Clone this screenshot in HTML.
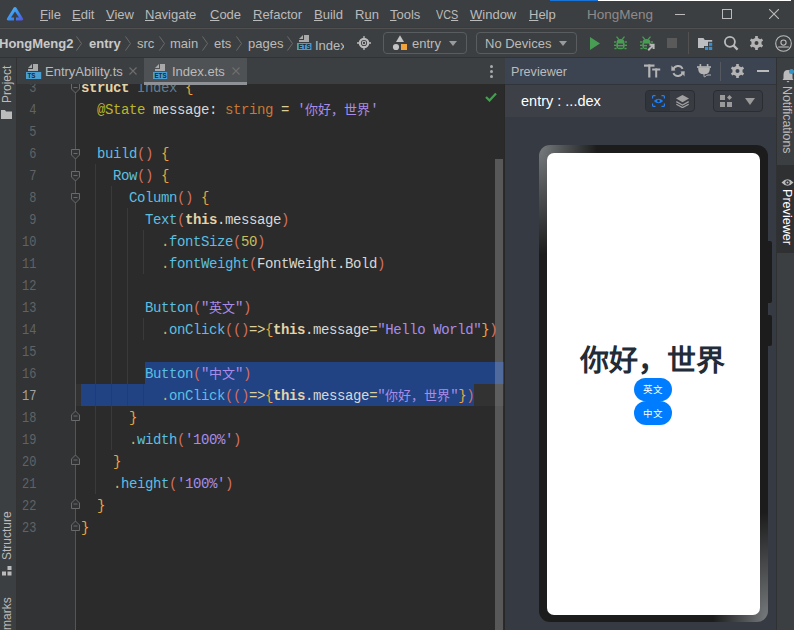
<!DOCTYPE html>
<html lang="zh-CN"><head><meta charset="utf-8">
<style>
*{margin:0;padding:0;box-sizing:border-box}
html,body{width:794px;height:630px;overflow:hidden;background:#3c3f41;font-family:"Liberation Sans",sans-serif;}
.a{position:absolute}
.menu span{position:absolute;top:7px;font-size:13px;line-height:15px;color:#bbbbbb;white-space:nowrap}
.menu u{text-decoration:underline;text-underline-offset:1px}
.cr{position:absolute;top:36px;font-size:13px;line-height:15px;color:#bbbbbb;white-space:nowrap}
.chev{position:absolute;top:36px;width:6px;height:15px}
.ln{position:absolute;left:17px;width:19.5px;text-align:right;font-family:"Liberation Mono",monospace;font-size:12px;color:#606366;line-height:22px;height:22px;padding-top:2px;transform:scaleY(1.2);transform-origin:0 15px}
.cl{position:absolute;left:81px;font-family:"Liberation Mono",monospace;font-size:14px;letter-spacing:-0.4px;line-height:22px;height:23px;padding-top:1px;white-space:pre;color:#a9b7c6}
.cj{font-size:13px;letter-spacing:0}
.kw{color:#e3d3a7;font-weight:bold}
.an{color:#bbb529}
.ty{color:#cc7832}
.st{color:#a98ce8}
.fn{color:#5cbfe0}
.pa{color:#d0705e}
.br{color:#eba53c}
.wh{color:#d7d7d7}
.op{color:#dccf9c}
.nu{color:#c8bd5a}
.dot{color:#d7b060}
.guide{position:absolute;width:1px;background:#393939}
.fold{position:absolute;left:71px;width:9px;height:10px}
</style></head><body>
<!-- title bar -->
<div class="a" style="left:550px;top:0;width:48px;height:1px;background:#1a74d8"></div>
<div class="a" style="left:598px;top:0;width:193px;height:1px;background:#ffffff"></div>
<div class="a" style="left:0;top:27px;width:794px;height:1px;background:#393c3e"></div>
<div class="a" style="left:0;top:28px;width:794px;height:1px;background:#505050"></div>
<div class="a" style="left:0;top:57px;width:794px;height:1px;background:#323232"></div>

<!-- logo -->
<svg class="a" style="left:4px;top:4px" width="24" height="20" viewBox="0 0 24 20">
<defs><linearGradient id="lg" x1="0" y1="0" x2="1" y2="1"><stop offset="0" stop-color="#5cc0f8"/><stop offset="0.55" stop-color="#3a8ff0"/><stop offset="1" stop-color="#5a4fe0"/></linearGradient></defs>
<path fill-rule="evenodd" fill="url(#lg)" d="M9.8 3.6 Q11 2.2 12.2 3.6 L19 14.6 Q19.8 16.4 18 16.4 L4 16.4 Q2.2 16.4 3 14.6 Z M11 7.4 L15 13.6 L12 13.6 L12 16.4 L10 16.4 L10 13.6 L7 13.6 Z"/>
</svg>
<div class="menu">
<span style="left:40px"><u>F</u>ile</span>
<span style="left:72px"><u>E</u>dit</span>
<span style="left:106px"><u>V</u>iew</span>
<span style="left:145px"><u>N</u>avigate</span>
<span style="left:210px"><u>C</u>ode</span>
<span style="left:253px"><u>R</u>efactor</span>
<span style="left:314px"><u>B</u>uild</span>
<span style="left:355px">R<u>u</u>n</span>
<span style="left:390px"><u>T</u>ools</span>
<span style="left:436px;transform:scaleX(0.83);transform-origin:0 0">VC<u>S</u></span>
<span style="left:470px"><u>W</u>indow</span>
<span style="left:529px"><u>H</u>elp</span>
<span style="left:587px;color:#8e8b8a;font-size:13.5px">HongMeng</span>
</div>
<!-- window controls -->
<div class="a" style="left:675px;top:14px;width:10px;height:1px;background:#bbbbbb"></div>
<div class="a" style="left:722px;top:9px;width:10px;height:10px;border:1px solid #bbbbbb"></div>
<svg class="a" style="left:769px;top:9px" width="10" height="10" viewBox="0 0 10 10"><path d="M0 0 L10 10 M10 0 L0 10" stroke="#bbbbbb" stroke-width="1.1"/></svg>

<!-- breadcrumb -->
<span class="cr" style="left:-1px;font-weight:bold;color:#c9c9c9">HongMeng2</span>
<svg class="chev" style="left:76px" viewBox="0 0 6 15"><path d="M0.5 0.5 L5.5 7.5 L0.5 14.5" stroke="#6a6a6a" fill="none"/></svg>
<span class="cr" style="left:89px;font-weight:bold;color:#c9c9c9">entry</span>
<svg class="chev" style="left:125px" viewBox="0 0 6 15"><path d="M0.5 0.5 L5.5 7.5 L0.5 14.5" stroke="#6a6a6a" fill="none"/></svg>
<span class="cr" style="left:137px">src</span>
<svg class="chev" style="left:159px" viewBox="0 0 6 15"><path d="M0.5 0.5 L5.5 7.5 L0.5 14.5" stroke="#6a6a6a" fill="none"/></svg>
<span class="cr" style="left:170px">main</span>
<svg class="chev" style="left:236px" viewBox="0 0 6 15"><path d="M0.5 0.5 L5.5 7.5 L0.5 14.5" stroke="#6a6a6a" fill="none"/></svg>
<span class="cr" style="left:214px">ets</span>
<svg class="chev" style="left:202px" viewBox="0 0 6 15"><path d="M0.5 0.5 L5.5 7.5 L0.5 14.5" stroke="#6a6a6a" fill="none"/></svg>
<span class="cr" style="left:248px">pages</span>
<svg class="chev" style="left:287px" viewBox="0 0 6 15"><path d="M0.5 0.5 L5.5 7.5 L0.5 14.5" stroke="#6a6a6a" fill="none"/></svg>
<!-- ETS icon -->
<svg class="a" style="left:297px;top:34px" width="16" height="17" viewBox="0 0 16 17"><path d="M2 5 L6 1 L6 5 Z M7 1 H12 V8 H2 V6 H7 Z" fill="#a9a9a9"/><rect x="0" y="9" width="14.4" height="7" fill="#4a9fd0"/><text x="1.5" y="15.2" font-family="Liberation Sans" font-weight="bold" font-size="7.4" fill="#1d2731" textLength="12" lengthAdjust="spacingAndGlyphs">ETS</text></svg>
<div class="a" style="left:315px;top:36px;width:29px;height:16px;overflow:hidden"><span style="font-size:13px;line-height:15px;color:#bbbbbb">Index</span></div>
<!-- target icon -->
<svg class="a" style="left:357px;top:36px" width="14" height="14" viewBox="0 0 14 14"><circle cx="7" cy="7" r="4.2" fill="none" stroke="#bbbbbb" stroke-width="2.2"/><circle cx="7" cy="7" r="1.7" fill="none" stroke="#bbbbbb" stroke-width="1.1"/><path d="M7 0 V2.5 M7 11.5 V14 M0 7 H2.5 M11.5 7 H14" stroke="#bbbbbb" stroke-width="1.3"/></svg>
<!-- entry combo -->
<div class="a" style="left:383px;top:32px;width:84px;height:22px;border:1px solid #5a5d5f;border-radius:4px"></div>
<svg class="a" style="left:392px;top:35px" width="16" height="16" viewBox="0 0 16 16"><path d="M8 0.3 L12 6.9 L4 6.9 Z" fill="#c4c4c4"/><circle cx="4" cy="12" r="3.1" fill="#c4c4c4"/><rect x="9" y="9" width="6" height="6" fill="#f2a43a"/></svg>
<span class="cr" style="left:412px">entry</span>
<svg class="a" style="left:449px;top:41px" width="8" height="5" viewBox="0 0 8 5"><path d="M0 0 L8 0 L4 5 Z" fill="#9a9a9a"/></svg>
<!-- no devices -->
<div class="a" style="left:476px;top:32px;width:101px;height:22px;border:1px solid #5a5d5f;border-radius:4px"></div>
<span class="cr" style="left:485px">No Devices</span>
<svg class="a" style="left:559px;top:41px" width="8" height="5" viewBox="0 0 8 5"><path d="M0 0 L8 0 L4 5 Z" fill="#9a9a9a"/></svg>
<!-- run icons -->
<svg class="a" style="left:590px;top:37px" width="10" height="13" viewBox="0 0 10 13"><path d="M0 0 L10 6.5 L0 13 Z" fill="#499c54"/></svg>
<svg class="a" style="left:613.5px;top:36px" width="13" height="14" viewBox="0 0 13 14"><g fill="#499c54"><path d="M3 0.3 L5.5 3.2 L4.6 4 L2 1.1 Z M10 0.3 L7.5 3.2 L8.4 4 L11 1.1 Z"/><ellipse cx="6.5" cy="5.2" rx="3.6" ry="2.3"/><rect x="2.2" y="5.2" width="8.6" height="8" rx="3.6"/><rect x="0" y="5.3" width="2.4" height="1.4"/><rect x="10.6" y="5.3" width="2.4" height="1.4"/><rect x="0" y="8.6" width="2.4" height="1.4"/><rect x="10.6" y="8.6" width="2.4" height="1.4"/><rect x="0.4" y="11.8" width="2.2" height="1.4"/><rect x="10.4" y="11.8" width="2.2" height="1.4"/></g><rect x="4" y="7.6" width="5" height="1.3" fill="#3c3f41"/><rect x="4" y="10.4" width="5" height="1.3" fill="#3c3f41"/></svg>
<svg class="a" style="left:640px;top:36px" width="15" height="15" viewBox="0 0 15 15"><g fill="#499c54"><path d="M3 0.3 L5.5 3.2 L4.6 4 L2 1.1 Z M10 0.3 L7.5 3.2 L8.4 4 L11 1.1 Z"/><ellipse cx="6.5" cy="5.2" rx="3.6" ry="2.3"/><rect x="2.2" y="5.2" width="8.6" height="8" rx="3.6"/><rect x="0" y="5.3" width="2.4" height="1.4"/><rect x="10.6" y="5.3" width="2.4" height="1.4"/><rect x="0" y="8.6" width="2.4" height="1.4"/><rect x="10.6" y="8.6" width="2.4" height="1.4"/><rect x="0.4" y="11.8" width="2.2" height="1.4"/><rect x="10.4" y="11.8" width="2.2" height="1.4"/></g><rect x="4" y="7.6" width="5" height="1.3" fill="#3c3f41"/><rect x="4" y="10.4" width="5" height="1.3" fill="#3c3f41"/><path d="M7 8 H15 V15 H7 Z" fill="#3c3f41"/><path d="M8.2 14.2 L13 9.4 M9.5 8.8 H13.6 V12.9" stroke="#b8b8b8" stroke-width="2" fill="none"/></svg>
<div class="a" style="left:667px;top:38px;width:10px;height:10px;background:#5a5a5a"></div>
<div class="a" style="left:688px;top:32px;width:1px;height:22px;background:#515151"></div>
<svg class="a" style="left:698px;top:37px" width="15" height="14" viewBox="0 0 15 14"><path d="M0 1 H5.5 L6.8 3 H14.2 V11 H0 Z" fill="#bbbdc0"/><path d="M10 4.8 H15 V14 H6 V9 H10 Z" fill="#3c3f41"/><g fill="#3592d8"><rect x="11" y="5.8" width="3.2" height="3"/><rect x="7" y="9.8" width="3.2" height="3.2"/><rect x="11" y="9.8" width="3.2" height="3.2"/></g></svg>
<svg class="a" style="left:723px;top:35px" width="16" height="16" viewBox="0 0 16 16"><circle cx="6.9" cy="6.8" r="5" fill="none" stroke="#bbbbbb" stroke-width="1.8"/><path d="M10.4 10.4 L14.6 14.6" stroke="#bbbbbb" stroke-width="2.2"/></svg>
<svg class="a" style="left:750px;top:36px" width="13" height="14" viewBox="0 0 13 14"><path fill-rule="evenodd" fill="#b4b4b4" d="M7.89 1.99 L7.81 0.12 L5.19 0.12 L5.11 1.99 L2.86 3.29 L1.20 2.43 L-0.11 4.70 L1.47 5.70 L1.47 8.30 L-0.11 9.30 L1.20 11.57 L2.86 10.71 L5.11 12.01 L5.19 13.88 L7.81 13.88 L7.89 12.01 L10.14 10.71 L11.80 11.57 L13.11 9.30 L11.53 8.30 L11.53 5.70 L13.11 4.70 L11.80 2.43 L10.14 3.29 Z M6.5 5 A2 2 0 1 0 6.5 9 A2 2 0 1 0 6.5 5 Z"/></svg>
<svg class="a" style="left:774.5px;top:34.5px" width="17" height="17" viewBox="0 0 17 17"><circle cx="8.5" cy="8.5" r="7.8" fill="none" stroke="#bbbbbb" stroke-width="1.1"/><circle cx="8.5" cy="7.6" r="2.6" fill="none" stroke="#bbbbbb" stroke-width="1.1"/><path d="M3.2 12 H13.8" stroke="#bbbbbb" stroke-width="1.1"/></svg>

<!-- left strip -->
<div class="a" style="left:16px;top:58px;width:1px;height:572px;background:#323232"></div>
<div class="a" style="left:1px;top:103px;transform-origin:0 0;transform:rotate(-90deg);font-size:12px;line-height:13px;color:#bbbbbb;white-space:nowrap">Project</div>
<svg class="a" style="left:1px;top:110px" width="11" height="9" viewBox="0 0 11 9"><path d="M0 0 H4 L5 1.5 H11 V9 H0 Z" fill="#bbbbbb"/></svg>
<div class="a" style="left:1px;top:560px;transform-origin:0 0;transform:rotate(-90deg);font-size:12px;line-height:13px;color:#bbbbbb;white-space:nowrap">Structure</div>
<svg class="a" style="left:2px;top:566px" width="10" height="10" viewBox="0 0 10 10"><g fill="#bbbbbb"><rect x="5.5" y="0" width="4" height="4"/><rect x="0" y="5.5" width="4" height="4"/><rect x="5.5" y="5.5" width="4" height="4"/></g></svg>
<div class="a" style="left:1px;top:630px;transform-origin:0 0;transform:rotate(-90deg);font-size:12px;line-height:13px;color:#bbbbbb;white-space:nowrap">marks</div>

<!-- tabs -->
<div class="a" style="left:144px;top:58px;width:103px;height:26px;background:#4e5254"></div>

<svg class="a" style="left:25.5px;top:63px" width="16" height="17" viewBox="0 0 16 17"><path d="M2 5 L6 1 L6 5 Z M7 1 H12 V8 H2 V6 H7 Z" fill="#a9a9a9"/><rect x="0" y="9" width="15.2" height="7" fill="#4a9fd0"/><text x="1.5" y="15.2" font-family="Liberation Sans" font-weight="bold" font-size="7.4" fill="#1d2731" textLength="8" lengthAdjust="spacingAndGlyphs">TS</text></svg>
<span class="a" style="left:45px;top:64px;font-size:13px;line-height:15px;color:#bbbbbb">EntryAbility.ts</span>
<svg class="a" style="left:129px;top:67px" width="8" height="8" viewBox="0 0 8 8"><path d="M0.5 0.5 L7.5 7.5 M7.5 0.5 L0.5 7.5" stroke="#6e6e6e" stroke-width="1.1"/></svg>
<svg class="a" style="left:153px;top:63px" width="16" height="17" viewBox="0 0 16 17"><path d="M2 5 L6 1 L6 5 Z M7 1 H12 V8 H2 V6 H7 Z" fill="#a9a9a9"/><rect x="0" y="9" width="14.2" height="7" fill="#4a9fd0"/><text x="1.5" y="15.2" font-family="Liberation Sans" font-weight="bold" font-size="7.4" fill="#1d2731" textLength="12" lengthAdjust="spacingAndGlyphs">ETS</text></svg>
<span class="a" style="left:172px;top:64px;font-size:13px;line-height:15px;color:#bbbbbb">Index.ets</span>
<svg class="a" style="left:232px;top:67px" width="8" height="8" viewBox="0 0 8 8"><path d="M0.5 0.5 L7.5 7.5 M7.5 0.5 L0.5 7.5" stroke="#6e6e6e" stroke-width="1.1"/></svg>
<!-- kebab -->
<div class="a" style="left:490px;top:65px;width:3px;height:3px;border-radius:50%;background:#aaaaaa"></div>
<div class="a" style="left:490px;top:70px;width:3px;height:3px;border-radius:50%;background:#aaaaaa"></div>
<div class="a" style="left:490px;top:75px;width:3px;height:3px;border-radius:50%;background:#aaaaaa"></div>

<!-- editor -->
<div class="a" style="left:17px;top:84px;width:488px;height:546px;overflow:hidden;background:#2b2b2b">
 <div class="a" style="left:0;top:0;width:59px;height:546px;background:#313335"></div>
<!--CODE-->
<div class="a" style="left:59px;top:300px;width:428px;height:22px;background:#323232"></div>
<div class="a" style="left:128px;top:278px;width:359px;height:22px;background:#214283"></div>
<div class="a" style="left:64px;top:300px;width:393px;height:22px;background:#214283"></div>
<div class="guide" style="left:78px;top:80px;height:330px;background:#3a3a3a"></div>
<div class="guide" style="left:94px;top:102px;height:264px;background:#3a3a3a"></div>
<div class="guide" style="left:110px;top:124px;height:198px;background:#3a3a3a"></div>
<div class="guide" style="left:126px;top:146px;height:44px;background:#3a3a3a"></div>
<div class="guide" style="left:126px;top:234px;height:22px;background:#3a3a3a"></div>
<div class="guide" style="left:126px;top:300px;height:22px;background:#3a3a3a"></div>
<div class="a" style="left:58px;top:0px;width:1px;height:546px;background:#555555"></div>
<svg class="a" style="left:54px;top:-1px" width="9" height="11" viewBox="0 0 9 11"><path d="M0.5 0.5 H8.5 V6 L4.5 10 L0.5 6 Z" fill="#313335" stroke="#6a6a6a" stroke-width="1"/><path d="M2.5 4.5 H6.5" stroke="#6a6a6a" stroke-width="1"/></svg>
<svg class="a" style="left:54px;top:65px" width="9" height="11" viewBox="0 0 9 11"><path d="M0.5 0.5 H8.5 V6 L4.5 10 L0.5 6 Z" fill="#313335" stroke="#6a6a6a" stroke-width="1"/><path d="M2.5 4.5 H6.5" stroke="#6a6a6a" stroke-width="1"/></svg>
<svg class="a" style="left:54px;top:87px" width="9" height="11" viewBox="0 0 9 11"><path d="M0.5 0.5 H8.5 V6 L4.5 10 L0.5 6 Z" fill="#313335" stroke="#6a6a6a" stroke-width="1"/><path d="M2.5 4.5 H6.5" stroke="#6a6a6a" stroke-width="1"/></svg>
<svg class="a" style="left:54px;top:109px" width="9" height="11" viewBox="0 0 9 11"><path d="M0.5 0.5 H8.5 V6 L4.5 10 L0.5 6 Z" fill="#313335" stroke="#6a6a6a" stroke-width="1"/><path d="M2.5 4.5 H6.5" stroke="#6a6a6a" stroke-width="1"/></svg>
<svg class="a" style="left:54px;top:326px" width="9" height="11" viewBox="0 0 9 11"><path d="M0.5 10.5 H8.5 V5 L4.5 1 L0.5 5 Z" fill="#313335" stroke="#6a6a6a" stroke-width="1"/><path d="M2.5 6 H6.5" stroke="#6a6a6a" stroke-width="1"/></svg>
<svg class="a" style="left:54px;top:370px" width="9" height="11" viewBox="0 0 9 11"><path d="M0.5 10.5 H8.5 V5 L4.5 1 L0.5 5 Z" fill="#313335" stroke="#6a6a6a" stroke-width="1"/><path d="M2.5 6 H6.5" stroke="#6a6a6a" stroke-width="1"/></svg>
<svg class="a" style="left:54px;top:414px" width="9" height="11" viewBox="0 0 9 11"><path d="M0.5 10.5 H8.5 V5 L4.5 1 L0.5 5 Z" fill="#313335" stroke="#6a6a6a" stroke-width="1"/><path d="M2.5 6 H6.5" stroke="#6a6a6a" stroke-width="1"/></svg>
<svg class="a" style="left:54px;top:436px" width="9" height="11" viewBox="0 0 9 11"><path d="M0.5 10.5 H8.5 V5 L4.5 1 L0.5 5 Z" fill="#313335" stroke="#6a6a6a" stroke-width="1"/><path d="M2.5 6 H6.5" stroke="#6a6a6a" stroke-width="1"/></svg>
<div class="ln" style="left:0;top:-8px;color:#606366">3</div>
<div class="cl" style="left:64px;top:-8px"><span class="kw">struct</span> <span style="color:#5d7f95">Index</span> <span class="br">{</span></div>
<div class="ln" style="left:0;top:14px;color:#606366">4</div>
<div class="cl" style="left:64px;top:14px">  <span class="an">@State</span> <span class="wh">message:</span> <span class="ty">string</span> <span class="op">=</span> <span class="st">'<span class="cj">你好，世界</span>'</span></div>
<div class="ln" style="left:0;top:36px;color:#606366">5</div>
<div class="cl" style="left:64px;top:36px"></div>
<div class="ln" style="left:0;top:58px;color:#606366">6</div>
<div class="cl" style="left:64px;top:58px">  <span class="fn">build</span><span class="pa">()</span> <span class="br">{</span></div>
<div class="ln" style="left:0;top:80px;color:#606366">7</div>
<div class="cl" style="left:64px;top:80px">    <span class="fn">Row</span><span class="pa">()</span> <span class="br">{</span></div>
<div class="ln" style="left:0;top:102px;color:#606366">8</div>
<div class="cl" style="left:64px;top:102px">      <span class="fn">Column</span><span class="pa">()</span> <span class="br">{</span></div>
<div class="ln" style="left:0;top:124px;color:#606366">9</div>
<div class="cl" style="left:64px;top:124px">        <span class="fn">Text</span><span class="pa">(</span><span class="kw">this</span><span class="wh">.message</span><span class="pa">)</span></div>
<div class="ln" style="left:0;top:146px;color:#606366">10</div>
<div class="cl" style="left:64px;top:146px">          <span class="dot">.</span><span class="fn">fontSize</span><span class="pa">(</span><span class="nu">50</span><span class="pa">)</span></div>
<div class="ln" style="left:0;top:168px;color:#606366">11</div>
<div class="cl" style="left:64px;top:168px">          <span class="dot">.</span><span class="fn">fontWeight</span><span class="pa">(</span><span class="wh">FontWeight.Bold</span><span class="pa">)</span></div>
<div class="ln" style="left:0;top:190px;color:#606366">12</div>
<div class="cl" style="left:64px;top:190px"></div>
<div class="ln" style="left:0;top:212px;color:#606366">13</div>
<div class="cl" style="left:64px;top:212px">        <span class="fn">Button</span><span class="pa">(</span><span class="st">"<span class="cj">英文</span>"</span><span class="pa">)</span></div>
<div class="ln" style="left:0;top:234px;color:#606366">14</div>
<div class="cl" style="left:64px;top:234px">          <span class="dot">.</span><span class="fn">onClick</span><span class="pa">(()</span><span class="op">=&gt;</span><span class="br">{</span><span class="kw">this</span><span class="wh">.message</span><span class="op">=</span><span class="st">"Hello World"</span><span class="br">}</span><span class="pa">)</span></div>
<div class="ln" style="left:0;top:256px;color:#606366">15</div>
<div class="cl" style="left:64px;top:256px"></div>
<div class="ln" style="left:0;top:278px;color:#606366">16</div>
<div class="cl" style="left:64px;top:278px">        <span class="fn">Button</span><span class="pa">(</span><span class="st">"<span class="cj">中文</span>"</span><span class="pa">)</span></div>
<div class="ln" style="left:0;top:300px;color:#a4a3a3">17</div>
<div class="cl" style="left:64px;top:300px">          <span class="dot">.</span><span class="fn">onClick</span><span class="pa">(()</span><span class="op">=&gt;</span><span class="br">{</span><span class="kw">this</span><span class="wh">.message</span><span class="op">=</span><span class="st">"<span class="cj">你好，世界</span>"</span><span class="br">}</span><span class="pa">)</span></div>
<div class="ln" style="left:0;top:322px;color:#606366">18</div>
<div class="cl" style="left:64px;top:322px">      <span class="br">}</span></div>
<div class="ln" style="left:0;top:344px;color:#606366">19</div>
<div class="cl" style="left:64px;top:344px">      <span class="dot">.</span><span class="fn">width</span><span class="pa">(</span><span class="st">'100%'</span><span class="pa">)</span></div>
<div class="ln" style="left:0;top:366px;color:#606366">20</div>
<div class="cl" style="left:64px;top:366px">    <span class="br">}</span></div>
<div class="ln" style="left:0;top:388px;color:#606366">21</div>
<div class="cl" style="left:64px;top:388px">    <span class="dot">.</span><span class="fn">height</span><span class="pa">(</span><span class="st">'100%'</span><span class="pa">)</span></div>
<div class="ln" style="left:0;top:410px;color:#606366">22</div>
<div class="cl" style="left:64px;top:410px">  <span class="br">}</span></div>
<div class="ln" style="left:0;top:432px;color:#606366">23</div>
<div class="cl" style="left:64px;top:432px"><span class="br">}</span></div>
<div class="a" style="left:478px;top:75px;width:8px;height:471px;background:rgba(255,255,255,0.217)"></div>
<svg class="a" style="left:468px;top:8px" width="12" height="10" viewBox="0 0 12 10"><path d="M1 5 L4.5 8.5 L11 1.5" stroke="#499c54" stroke-width="2.2" fill="none"/></svg>
<!--/CODE-->
</div>
<div class="a" style="left:504px;top:84px;width:1px;height:546px;background:#282828"></div>
<div class="a" style="left:144px;top:82px;width:103px;height:3px;background:#8e9296"></div>

<!-- previewer -->
<div class="a" style="left:505px;top:58px;width:271px;height:26px;background:#3d4451"></div>
<div class="a" style="left:505px;top:84px;width:271px;height:1px;background:#31353b"></div>
<div class="a" style="left:505px;top:85px;width:271px;height:32px;background:#3d4047"></div>
<div class="a" style="left:505px;top:117px;width:271px;height:513px;background:#353a43"></div>
<span class="a" style="left:511px;top:65px;font-size:12.6px;line-height:15px;color:#bbbbbb">Previewer</span>
<div class="a" style="left:720px;top:62px;width:1px;height:19px;background:#55595f"></div>
<!-- Tt -->
<svg class="a" style="left:644px;top:64px" width="17" height="14" viewBox="0 0 17 14"><g fill="#b4b4b4"><rect x="0" y="0.5" width="10.5" height="2.2"/><rect x="4.2" y="0.5" width="2.2" height="13"/><rect x="8.2" y="4.5" width="8" height="2"/><rect x="11.2" y="4.5" width="2" height="9"/></g></svg>
<svg class="a" style="left:671px;top:64px" width="14" height="14" viewBox="0 0 14 14"><path d="M2.2 6 A5 5 0 0 1 11.6 4.8" fill="none" stroke="#b4b4b4" stroke-width="1.9"/><path d="M11.8 8 A5 5 0 0 1 2.4 9.2" fill="none" stroke="#b4b4b4" stroke-width="1.9"/><path d="M0.5 1.5 L4.5 6.5 L0.3 6.8 Z" fill="#b4b4b4"/><path d="M13.5 12.5 L9.5 7.5 L13.7 7.2 Z" fill="#b4b4b4"/></svg>
<svg class="a" style="left:697px;top:64px" width="15" height="14" viewBox="0 0 15 14"><g fill="#b4b4b4"><rect x="2.6" y="0" width="1.6" height="3"/><rect x="9.8" y="0" width="1.6" height="3"/><rect x="0" y="2.2" width="14" height="1.6"/><path d="M1.2 3.5 H12.8 V5 Q12.8 10.3 7 10.3 Q1.2 10.3 1.2 5 Z"/></g><path d="M7 10 V12.2 Q7 13.4 8.2 12.6 Q9.5 11 11 11 H14" fill="none" stroke="#b4b4b4" stroke-width="1"/></svg>
<svg class="a" style="left:730.5px;top:64px" width="13" height="14" viewBox="0 0 13 14"><path fill-rule="evenodd" fill="#b4b4b4" d="M7.89 1.99 L7.81 0.12 L5.19 0.12 L5.11 1.99 L2.86 3.29 L1.20 2.43 L-0.11 4.70 L1.47 5.70 L1.47 8.30 L-0.11 9.30 L1.20 11.57 L2.86 10.71 L5.11 12.01 L5.19 13.88 L7.81 13.88 L7.89 12.01 L10.14 10.71 L11.80 11.57 L13.11 9.30 L11.53 8.30 L11.53 5.70 L13.11 4.70 L11.80 2.43 L10.14 3.29 Z M6.5 5 A2 2 0 1 0 6.5 9 A2 2 0 1 0 6.5 5 Z"/></svg>
<div class="a" style="left:757px;top:70px;width:12px;height:2px;background:#bbbbbb"></div>
<span class="a" style="left:521px;top:93px;font-size:14.5px;line-height:16px;color:#ffffff">entry : ...dex</span>
<div class="a" style="left:645px;top:90px;width:50px;height:22px;border:1px solid #2a2d32;border-radius:4px;background:#393c43"></div>
<div class="a" style="left:646px;top:91px;width:24px;height:20px;background:#30343b;border-radius:3px 0 0 3px"></div>
<svg class="a" style="left:651.5px;top:95px" width="13" height="12" viewBox="0 0 13 12"><path d="M0.6 3.5 V1.6 Q0.6 0.6 1.6 0.6 H3.5 M9.5 0.6 H11.4 Q12.4 0.6 12.4 1.6 V3.5 M12.4 8.5 V10.4 Q12.4 11.4 11.4 11.4 H9.5 M3.5 11.4 H1.6 Q0.6 11.4 0.6 10.4 V8.5" stroke="#2a7ff0" stroke-width="1.2" fill="none"/><path d="M1.8 6 Q6.5 1.6 11.2 6 Q6.5 10.4 1.8 6 Z" fill="#1a7ef5"/><circle cx="6.5" cy="6" r="1.3" fill="#2b2f36"/></svg>
<svg class="a" style="left:675.5px;top:94.5px" width="13" height="13" viewBox="0 0 13 13"><path d="M6.5 0 L13 3.6 L6.5 7.2 L0 3.6 Z" fill="#a0a0a0"/><path d="M0.3 6.6 L6.5 10 L12.7 6.6 M0.3 9.2 L6.5 12.6 L12.7 9.2" stroke="#a0a0a0" stroke-width="1.3" fill="none"/></svg>
<div class="a" style="left:713px;top:90px;width:50px;height:22px;border:1px solid #2a2d32;border-radius:4px;background:#393c43"></div>
<svg class="a" style="left:720px;top:95px" width="12" height="12" viewBox="0 0 12 12"><g fill="#9a9a9a"><rect x="0" y="0" width="5" height="5"/><rect x="0" y="7" width="5" height="5"/><rect x="7" y="7" width="5" height="5"/><path d="M9.5 0 L12 2.5 L9.5 5 L7 2.5 Z"/></g></svg>
<svg class="a" style="left:745px;top:98px" width="10" height="7" viewBox="0 0 10 7"><path d="M0 0 H10 L5 7 Z" fill="#9a9a9a"/></svg>
<!-- phone -->
<div class="a" style="left:768px;top:241px;width:4px;height:62px;background:#1c1c1c;border-radius:0 2px 2px 0"></div>
<div class="a" style="left:768px;top:315px;width:4px;height:31px;background:#1c1c1c;border-radius:0 2px 2px 0"></div>
<div class="a" style="left:539px;top:145px;width:229px;height:477px;border-radius:11px;background:radial-gradient(ellipse 58px 110px at 0 0,#7a7d7f 0%,rgba(90,93,95,0.8) 45%,rgba(28,28,28,0) 100%),radial-gradient(ellipse 55px 110px at 100% 100%,#7a7d7f 0%,rgba(90,93,95,0.8) 45%,rgba(28,28,28,0) 100%),#1c1c1c"></div>
<div class="a" style="left:547px;top:153px;width:213px;height:462px;border-radius:7px;background:#ffffff"></div>
<div class="a" style="left:580px;top:342px;font-size:29px;line-height:38px;font-weight:bold;color:#222c38;white-space:nowrap">你好，世界</div>
<div class="a" style="left:634px;top:378px;width:38px;height:23px;border-radius:12px;background:#007dff;color:#fff;font-size:9.5px;line-height:23px;text-align:center">英文</div>
<div class="a" style="left:634px;top:401px;width:38px;height:24px;border-radius:12px;background:#007dff;color:#fff;font-size:9.5px;line-height:25px;text-align:center">中文</div>
<!-- right strip -->
<div class="a" style="left:776px;top:58px;width:1px;height:572px;background:#2f3133"></div>
<div class="a" style="left:777px;top:165px;width:17px;height:88px;background:#2e3032"></div>
<svg class="a" style="left:782px;top:69px" width="12" height="14" viewBox="0 0 12 14"><path d="M6 1 Q10.5 1 10.5 6 V9.5 L11.5 11 H0.5 L1.5 9.5 V6 Q1.5 1 6 1 Z" fill="#bbbbbb"/><path d="M4.5 12 H7.5 L6 13.5 Z" fill="#bbbbbb"/><circle cx="9.5" cy="2.5" r="2.5" fill="#3592c4"/></svg>
<div class="a" style="left:793px;top:86px;transform-origin:0 0;transform:rotate(90deg);font-size:12.4px;line-height:13px;color:#bbbbbb;white-space:nowrap">Notifications</div>
<svg class="a" style="left:781px;top:178px" width="13" height="9" viewBox="0 0 13 9"><path d="M0.5 4.5 Q6.5 -2 12.5 4.5 Q6.5 11 0.5 4.5 Z" fill="#bbbbbb"/><circle cx="6.5" cy="4.5" r="2.2" fill="#2e3032"/><circle cx="6.5" cy="4.5" r="1" fill="#bbbbbb"/></svg>
<div class="a" style="left:793px;top:189px;transform-origin:0 0;transform:rotate(90deg);font-size:12.6px;line-height:13px;color:#ffffff;white-space:nowrap">Previewer</div>
</body></html>
